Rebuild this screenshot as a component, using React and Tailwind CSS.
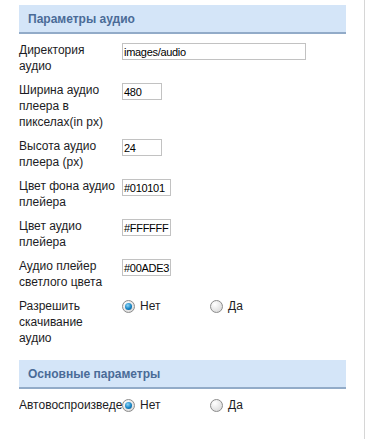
import React from "react";

function Radio({ checked }) {
  return (
    <span className="relative z-10 inline-flex items-center justify-center w-[13px] h-[13px] rounded-full border border-[#8c8c8c] bg-[radial-gradient(circle_at_35%_30%,#ffffff,#d2d2d2)] shrink-0">
      {checked && (
        <span className="block w-[7px] h-[7px] rounded-full bg-[radial-gradient(circle_at_40%_35%,#8fd6f7,#1583c4_55%,#0a4f80)]" />
      )}
    </span>
  );
}

function RadioGroup({ value }) {
  return (
    <div className="flex items-center h-[16px] relative z-10">
      <div className="flex items-center w-[88px] gap-[5px]">
        <Radio checked={value === "no"} />
        <span>Нет</span>
      </div>
      <div className="flex items-center gap-[5px]">
        <Radio checked={value === "yes"} />
        <span>Да</span>
      </div>
    </div>
  );
}

function Header({ children, className = "" }) {
  return (
    <div
      className={
        "h-[29px] w-[327px] bg-[#d4e5f8] border-b-2 border-[#92abc8] flex items-center pl-[9px] font-bold text-[12px] text-[#4a6b97] " +
        className
      }
    >
      {children}
    </div>
  );
}

function TextInput({ value, w }) {
  return (
    <div
      className={
        "mt-[1px] h-[17px] border border-[#c2c2c2] bg-white flex items-center pl-[1px] text-[11px] tracking-[-0.3px] text-black whitespace-nowrap overflow-hidden " +
        w
      }
    >
      {value}
    </div>
  );
}

function Row({ label, children }) {
  return (
    <div className="flex">
      <div className="w-[103px] shrink-0 pr-[4px]">{label}</div>
      <div>{children}</div>
    </div>
  );
}

export default function App() {
  return (
    <div
      className="relative w-[366px] h-[439px] bg-white text-[12px] leading-[16px] text-[#1c1c24] overflow-hidden"
      style={{ fontFamily: '"Liberation Sans", Arial, sans-serif' }}
    >
      <div className="absolute top-0 bottom-0 left-[364px] w-px bg-[#d6d6d6]" />
      <div className="pl-[19px] pt-[5px] flex flex-col">
        <Header>Параметры аудио</Header>
        <div className="flex flex-col gap-[8px] mt-[8px]">
          <Row label={<>Директория<br />аудио</>}>
            <TextInput value="images/audio" w="w-[184px]" />
          </Row>
          <Row label={<>Ширина аудио<br />плеера в<br />пикселах(in px)</>}>
            <TextInput value="480" w="w-[40px]" />
          </Row>
          <Row label={<>Высота аудио<br />плеера (px)</>}>
            <TextInput value="24" w="w-[40px]" />
          </Row>
          <Row label={<>Цвет фона аудио<br />плейера</>}>
            <TextInput value="#010101" w="w-[49px]" />
          </Row>
          <Row label={<>Цвет аудио<br />плейера</>}>
            <TextInput value="#FFFFFF" w="w-[49px]" />
          </Row>
          <Row label={<>Аудио плейер<br />светлого цвета</>}>
            <TextInput value="#00ADE3" w="w-[49px]" />
          </Row>
          <Row label={<>Разрешить<br />скачивание<br />аудио</>}>
            <RadioGroup value="no" />
          </Row>
        </div>
        <Header className="mt-[14px]">Основные параметры</Header>
        <div className="mt-[8px] flex">
          <div className="w-[103px] shrink-0">
            <span className="block w-[108px] overflow-hidden whitespace-nowrap">Автовоспроизведение</span>
          </div>
          <RadioGroup value="no" />
        </div>
      </div>
    </div>
  );
}
